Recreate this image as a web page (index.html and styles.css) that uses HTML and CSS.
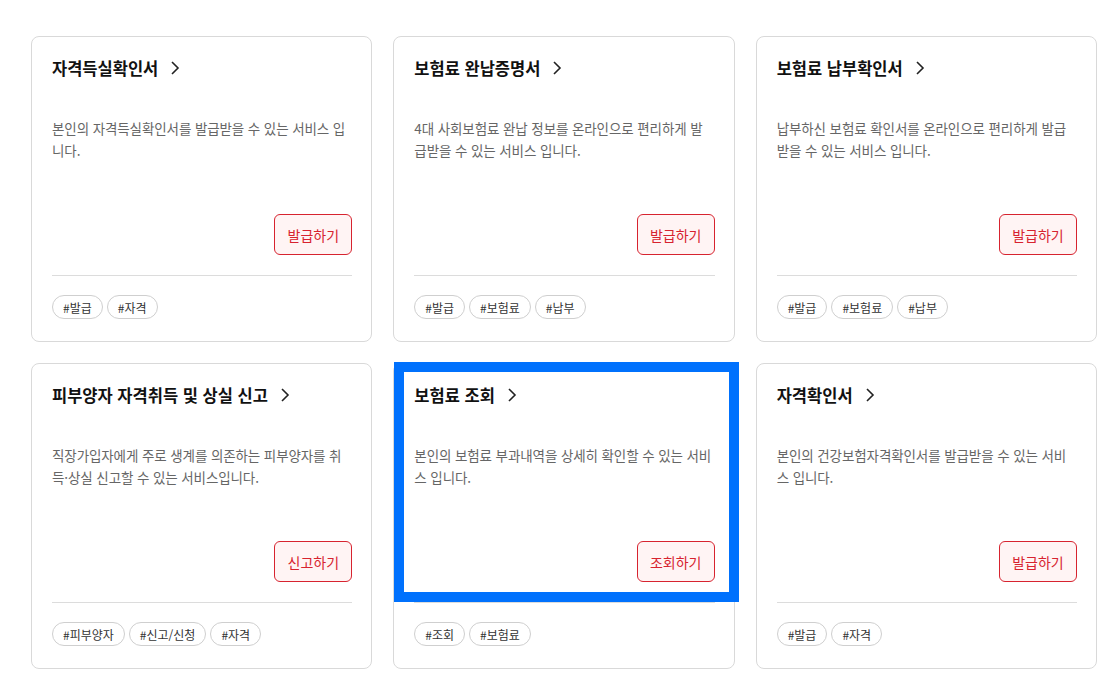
FILE: index.html
```html
<!DOCTYPE html>
<html lang="ko">
<head>
    <meta charset="UTF-8">
    <meta name="viewport" content="width=device-width, initial-scale=1.0">
    <title>민원 서비스</title>
    <link rel="stylesheet" href="styles.css">
</head>
<body>
    <main class="service-grid">
        <div class="card">
            <a href="#" class="card-link">
                <h3 class="card-title">자격득실확인서 <svg class="chev" width="10" height="16" viewBox="0 0 10 16"><polyline points="2,2 8,8 2,14" fill="none" stroke="#222" stroke-width="1.6"/></svg></h3>
                <p class="card-desc">본인의 자격득실확인서를 발급받을 수 있는 서비스 입니다.</p>
                <div class="card-action"><span class="btn">발급하기</span></div>
            </a>
            <div class="tags"><span class="tag">#발급</span><span class="tag">#자격</span></div>
        </div>
        <div class="card">
            <a href="#" class="card-link">
                <h3 class="card-title">보험료 완납증명서 <svg class="chev" width="10" height="16" viewBox="0 0 10 16"><polyline points="2,2 8,8 2,14" fill="none" stroke="#222" stroke-width="1.6"/></svg></h3>
                <p class="card-desc">4대 사회보험료 완납 정보를 온라인으로 편리하게 발급받을 수 있는 서비스 입니다.</p>
                <div class="card-action"><span class="btn">발급하기</span></div>
            </a>
            <div class="tags"><span class="tag">#발급</span><span class="tag">#보험료</span><span class="tag">#납부</span></div>
        </div>
        <div class="card">
            <a href="#" class="card-link">
                <h3 class="card-title">보험료 납부확인서 <svg class="chev" width="10" height="16" viewBox="0 0 10 16"><polyline points="2,2 8,8 2,14" fill="none" stroke="#222" stroke-width="1.6"/></svg></h3>
                <p class="card-desc">납부하신 보험료 확인서를 온라인으로 편리하게 발급받을 수 있는 서비스 입니다.</p>
                <div class="card-action"><span class="btn">발급하기</span></div>
            </a>
            <div class="tags"><span class="tag">#발급</span><span class="tag">#보험료</span><span class="tag">#납부</span></div>
        </div>
        <div class="card">
            <a href="#" class="card-link">
                <h3 class="card-title">피부양자 자격취득 및 상실 신고 <svg class="chev" width="10" height="16" viewBox="0 0 10 16"><polyline points="2,2 8,8 2,14" fill="none" stroke="#222" stroke-width="1.6"/></svg></h3>
                <p class="card-desc">직장가입자에게 주로 생계를 의존하는 피부양자를 취득·상실 신고할 수 있는 서비스입니다.</p>
                <div class="card-action"><span class="btn">신고하기</span></div>
            </a>
            <div class="tags"><span class="tag">#피부양자</span><span class="tag">#신고/신청</span><span class="tag">#자격</span></div>
        </div>
        <div class="card">
            <a href="#" class="card-link focused">
                <h3 class="card-title">보험료 조회 <svg class="chev" width="10" height="16" viewBox="0 0 10 16"><polyline points="2,2 8,8 2,14" fill="none" stroke="#222" stroke-width="1.6"/></svg></h3>
                <p class="card-desc">본인의 보험료 부과내역을 상세히 확인할 수 있는 서비스 입니다.</p>
                <div class="card-action"><span class="btn">조회하기</span></div>
            </a>
            <div class="tags"><span class="tag">#조회</span><span class="tag">#보험료</span></div>
        </div>
        <div class="card">
            <a href="#" class="card-link">
                <h3 class="card-title">자격확인서 <svg class="chev" width="10" height="16" viewBox="0 0 10 16"><polyline points="2,2 8,8 2,14" fill="none" stroke="#222" stroke-width="1.6"/></svg></h3>
                <p class="card-desc">본인의 건강보험자격확인서를 발급받을 수 있는 서비스 입니다.</p>
                <div class="card-action"><span class="btn">발급하기</span></div>
            </a>
            <div class="tags"><span class="tag">#발급</span><span class="tag">#자격</span></div>
        </div>
    </main>
</body>
</html>
```

FILE: styles.css
```css
body {
    margin: 0;
    background: #fff;
    font-family: "Noto Sans CJK KR", "Noto Sans", sans-serif;
    color: #222;
}
.service-grid {
    display: grid;
    grid-template-columns: repeat(3, 1fr);
    gap: 21px;
    padding: 36px 16px 0 31px;
}
.card {
    border: 1px solid #d9d9d9;
    border-radius: 8px;
    padding: 0 19px 22px 20px;
    background: #fff;
}
.card-link {
    display: block;
    margin: 8px -14px 0 -10px;
    padding: 11px 14px 10px 10px;
    color: inherit;
    text-decoration: none;
    position: relative;
}
.card-link::after {
    content: "";
    position: absolute;
    left: 10px;
    right: 14px;
    bottom: -11px;
    border-bottom: 1px solid #dcdcdc;
}
.card-link.focused {
    outline: 10px solid #0071fd;
}
.card-title {
    margin: 0;
    font-size: 16.5px;
    font-weight: 700;
    line-height: 24px;
    color: #111;
    display: flex;
    align-items: center;
}
.chev {
    margin-left: 12px;
}
.card-desc {
    margin: 37px 0 0 0;
    height: 97px;
    font-size: 13.5px;
    letter-spacing: -0.1px;
    line-height: 22px;
    color: #666;
}
.card-action {
    display: flex;
    justify-content: flex-end;
}
.btn {
    display: inline-flex;
    align-items: center;
    justify-content: center;
    width: 76px;
    height: 39px;
    border: 1px solid #d7232f;
    border-radius: 6px;
    background: #fff4f4;
    color: #d7232f;
    font-size: 14px;
}
.tags {
    display: flex;
    gap: 4px;
    margin-top: 30px;
}
.tag {
    display: inline-flex;
    align-items: center;
    height: 22px;
    padding: 0 10px;
    border: 1px solid #cfcfcf;
    border-radius: 12px;
    font-size: 12px;
    color: #333;
}
```
